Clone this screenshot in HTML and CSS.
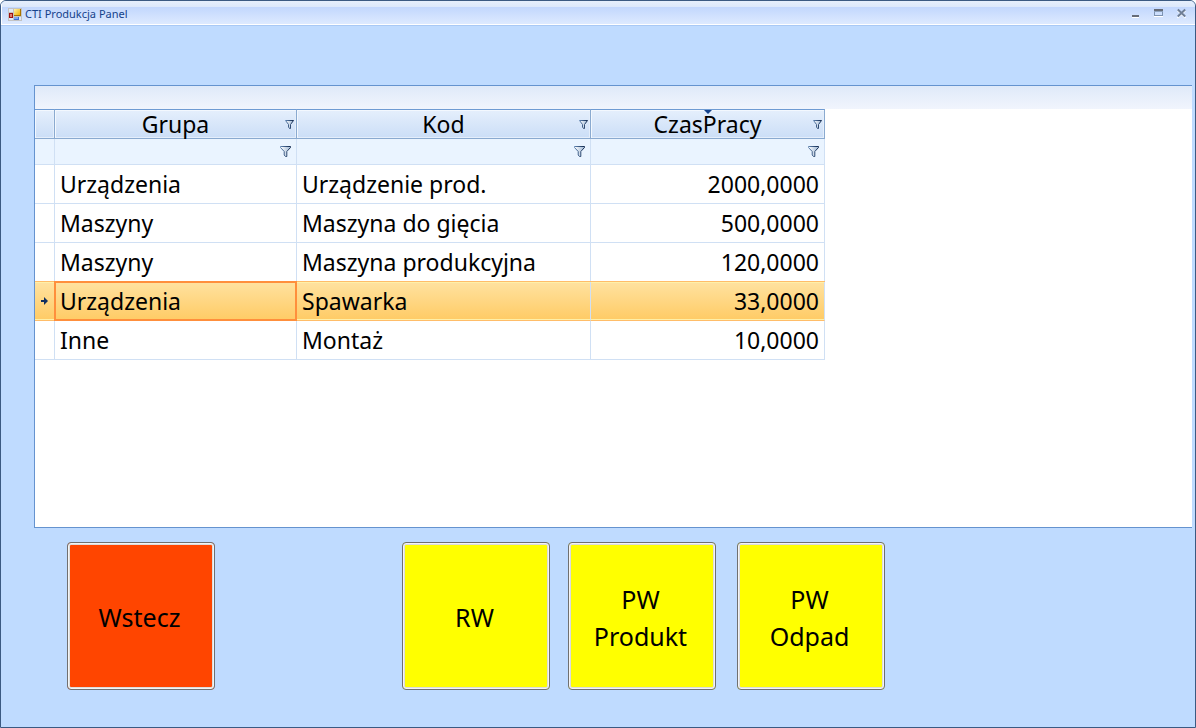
FILE: index.html
```html
<!DOCTYPE html>
<html lang="pl">
<head>
<meta charset="utf-8">
<meta name="viewport" content="width=device-width, initial-scale=1">
<title>CTI Produkcja Panel</title>
<link rel="stylesheet" href="styles.css">
</head>
<body>
<svg class="defs" aria-hidden="true">
  <defs>
    <linearGradient id="funnel-fill" x1="0" y1="0" x2="1" y2="0">
      <stop offset="0" stop-color="#ffffff"/>
      <stop offset="1" stop-color="#9db6d4"/>
    </linearGradient>
    <linearGradient id="funnel-line" x1="0" y1="0" x2="1" y2="0">
      <stop offset="0" stop-color="#5f83b0"/>
      <stop offset="1" stop-color="#12294d"/>
    </linearGradient>
    <linearGradient id="gold" x1="0" y1="0" x2="1" y2="1">
      <stop offset="0" stop-color="#fff2a8"/>
      <stop offset="1" stop-color="#f0b000"/>
    </linearGradient>
    <symbol id="funnel" viewBox="0 0 11 11">
      <path d="M.5 .5h10v1L6.800 5.500v5h-1.300l-1.300-1.500V5.500L.5 1.500z" fill="url(#funnel-fill)" stroke="url(#funnel-line)"/>
    </symbol>
    <symbol id="funnel-small" viewBox="0 0 9 9">
      <path d="M.5 .5h8L5.500 4.500v4h-1l-1-1.500V4.500z" fill="url(#funnel-fill)" stroke="url(#funnel-line)"/>
    </symbol>
  </defs>
</svg>
<div class="window">
  <header class="titlebar">
    <svg class="app-icon" viewBox="0 0 14 13" shape-rendering="crispEdges" aria-hidden="true">
      <path d="M0 0h14v13H0z" fill="#c3c3c3"/>
      <path d="M1 1h4v3H1zM1 10h4v2H1z" fill="#dfe8f6"/>
      <path d="M1 5h4v5H1z" fill="#a01010"/><path d="M2 6h2v3H2z" fill="#e08070"/>
      <path d="M6 1h7v7H6z" fill="#a87400"/><path d="M6 1h6v6H6z" fill="url(#gold)"/>
      <path d="M6 9h5v3H6z" fill="#3f6fd0"/><path d="M6 9h4v2H6z" fill="#7fa8ee"/>
      <path d="M11 9h2v3h-2z" fill="#dfe8f6"/>
    </svg>
    <h1 class="title">CTI Produkcja Panel</h1>
    <div class="window-controls">
      <button class="control" type="button" aria-label="Minimalizuj">
        <svg viewBox="0 0 9 9" shape-rendering="crispEdges"><path d="M1 8h7v1H1z" fill="#fff"/><path d="M1 6h7v2H1z" fill="#666c78"/></svg>
      </button>
      <button class="control" type="button" aria-label="Maksymalizuj">
        <svg viewBox="0 0 9 9" shape-rendering="crispEdges"><path d="M0 7h9v1H0z" fill="#fff"/><path d="M0 0h9v2H0z" fill="#666c78"/><path d="M0 2h9v1H0z" fill="#8da2bd"/><path d="M0 3h1v4H0zM8 3h1v4H8zM0 6h9v1H0z" fill="#7d93b2"/></svg>
      </button>
      <button class="control" type="button" aria-label="Zamknij">
        <svg viewBox="0 0 9 9"><path d="M.500 1.500l8 7.500M8.500 1.500l-8 7.500" stroke="#fff" stroke-width="1.500"/><path d="M.800 .500l7.400 7M8.200 .500l-7.400 7" stroke="#6f7f97" stroke-width="2"/></svg>
      </button>
    </div>
  </header>
  <main class="content">
    <section class="grid-panel">
      <div class="group-strip"></div>
      <table class="grid">
        <colgroup><col class="col-mark"><col class="col-group"><col class="col-code"><col class="col-time"></colgroup>
        <thead>
          <tr class="head-row">
            <td></td>
            <th scope="col"><div class="head-cell"><span class="head-label">Grupa</span><button class="head-filter" type="button" aria-label="Filtr Grupa"><svg><use href="#funnel-small"/></svg></button></div></th>
            <th scope="col"><div class="head-cell"><span class="head-label">Kod</span><button class="head-filter" type="button" aria-label="Filtr Kod"><svg><use href="#funnel-small"/></svg></button></div></th>
            <th scope="col" aria-sort="descending"><div class="head-cell"><span class="head-label">CzasPracy</span><button class="head-filter" type="button" aria-label="Filtr CzasPracy"><svg><use href="#funnel-small"/></svg></button><span class="sort-mark"></span></div></th>
          </tr>
          <tr class="filter-row">
            <td></td>
            <td><div class="filter-cell"><input class="filter-input" type="text" aria-label="Grupa"><button class="filter-button" type="button" aria-label="Warunek Grupa"><svg><use href="#funnel"/></svg></button></div></td>
            <td><div class="filter-cell"><input class="filter-input" type="text" aria-label="Kod"><button class="filter-button" type="button" aria-label="Warunek Kod"><svg><use href="#funnel"/></svg></button></div></td>
            <td><div class="filter-cell"><input class="filter-input" type="text" aria-label="CzasPracy"><button class="filter-button" type="button" aria-label="Warunek CzasPracy"><svg><use href="#funnel"/></svg></button></div></td>
          </tr>
        </thead>
        <tbody>
          <tr class="row"><td></td><td>Urządzenia</td><td>Urządzenie prod.</td><td class="number">2000,0000</td></tr>
          <tr class="row"><td></td><td>Maszyny</td><td>Maszyna do gięcia</td><td class="number">500,0000</td></tr>
          <tr class="row"><td></td><td>Maszyny</td><td>Maszyna produkcyjna</td><td class="number">120,0000</td></tr>
          <tr class="row selected" aria-selected="true"><td><svg class="arrow" viewBox="0 0 7 8" aria-hidden="true"><path d="M0 3h3V0l4 4-4 4V5H0z" fill="#12305f"/></svg></td><td class="current">Urządzenia</td><td>Spawarka</td><td class="number">33,0000</td></tr>
          <tr class="row"><td></td><td>Inne</td><td>Montaż</td><td class="number">10,0000</td></tr>
        </tbody>
      </table>
    </section>
    <nav class="actions">
      <button class="action back" type="button">Wstecz</button>
      <button class="action" type="button">RW</button>
      <button class="action" type="button">PW Produkt</button>
      <button class="action waste" type="button">PW Odpad</button>
    </nav>
  </main>
</div>
</body>
</html>
```
FILE: styles.css
```css
* { box-sizing: border-box; }

body {
  margin: 0;
  background: #fff;
  color: #000;
  font-family: "Noto Sans", "Open Sans", sans-serif;
}

button, input { font: inherit; color: inherit; }

.defs { position: absolute; width: 0; height: 0; }

.window {
  display: flex;
  flex-direction: column;
  min-height: 100vh;
  border: 1px solid #3b5a82;
  border-radius: 6px 6px 0 0;
  background: #bfdbff;
  overflow: hidden;
}

.titlebar {
  display: flex;
  align-items: center;
  height: 25px;
  padding: 2px 9px 0 7px;
  border-bottom: 1px solid #a9c9f5;
  box-shadow: inset 1px -1px #fff;
  background: linear-gradient(#e6effc 0, #dce8fb 6px, #c2d7fd 6px, #dfebff 100%);
}

.app-icon { width: 14px; height: 13px; }

.title {
  flex: 1;
  margin: 0 0 0 3px;
  color: #15428b;
  font-size: 11px;
  font-weight: 400;
  line-height: 16px;
}

.window-controls { display: flex; gap: 14px; padding-bottom: 2px; }

.control {
  width: 9px;
  height: 9px;
  padding: 0;
  border: 0;
  background: none;
}

.control svg { display: block; width: 9px; height: 9px; overflow: visible; }

.content {
  flex: 1;
  display: flex;
  flex-direction: column;
  gap: 14px;
  padding: 59px 3px 37px 33px;
}

.grid-panel {
  flex: 1;
  border: solid #6593cf;
  border-width: 1px 0 1px 1px;
  background: #fff;
  overflow: hidden;
}

.group-strip {
  height: 23px;
  background: linear-gradient(#dfe9f9, #f1f5fd);
}

.grid {
  table-layout: fixed;
  width: 790px;
  border-collapse: separate;
  border-spacing: 0;
  font-size: 23px;
  line-height: 28px;
}

.col-mark { width: 20px; }
.col-group { width: 242px; }
.col-code { width: 294px; }
.col-time { width: 234px; }

.grid td, .grid th { padding: 0; font-weight: 400; }

.head-row > * {
  height: 30px;
  border: solid #8aaad0;
  border-width: 1px 1px 1px 0;
  border-top-color: #6f9bd3;
  background: linear-gradient(#e5effc, #cbdef7);
  box-shadow: inset 1px 1px #f3f8fe, inset -1px -1px #e4eefb;
}

.head-cell {
  position: relative;
  display: flex;
  align-items: center;
  height: 28px;
  padding-right: 2px;
}

.head-label { flex: 1; padding-left: 11px; text-align: center; }

.head-filter, .filter-button {
  flex: none;
  padding: 0;
  border: 0;
  background: none;
}

.head-filter svg { display: block; width: 9px; height: 9px; }
.filter-button svg { display: block; width: 11px; height: 11px; }

.sort-mark {
  position: absolute;
  top: 0;
  left: 50%;
  margin-left: -4px;
  border: solid transparent;
  border-width: 4px 4px 0;
  border-top-color: #15428b;
}

.filter-row > td {
  height: 26px;
  border: solid #d0e0f4;
  border-width: 0 1px 1px 0;
  background: #eaf4ff;
}

.filter-cell { display: flex; align-items: center; height: 25px; padding: 0 5px; }

.filter-input {
  flex: 1;
  min-width: 0;
  height: 20px;
  padding: 0;
  border: 0;
  outline: 0;
  background: none;
  font-size: 16px;
}

.grid .row > td {
  height: 39px;
  padding: 0 5px;
  border: solid #d0e0f4;
  border-width: 0 1px 1px 0;
}

.row > .number { text-align: right; }

.grid .selected > td {
  border-bottom-color: #ffbd69;
  background: linear-gradient(#ffe2a0, #ffcb65);
  box-shadow: 0 -1px #ffbd69, inset 0 1px #fff0a8, inset 0 -1px #fff0a8;
}

.arrow { display: block; width: 7px; height: 8px; margin: 0 auto; }

.current { position: relative; }

.current::after {
  content: "";
  position: absolute;
  inset: -1px;
  border: 2px solid #ff8f3c;
}

.actions { display: flex; padding-left: 33px; }

.action {
  width: 148px;
  height: 148px;
  margin-right: 18px;
  padding: 3px 18px 0 15px;
  border: 1px solid #707070;
  border-radius: 4px;
  background: #ff0;
  box-shadow: inset 0 0 0 1px #f4f4f4, inset 0 0 0 2px #dcdcdc;
  font-size: 25px;
  line-height: 37px;
}

.back { margin-right: 187px; background: #ff4500; }
.waste { margin-left: 3px; }
```
